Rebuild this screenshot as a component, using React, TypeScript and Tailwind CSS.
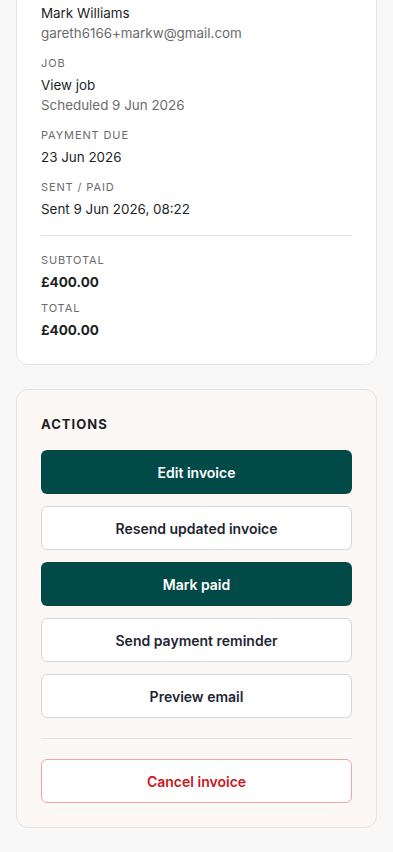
import React from 'react';

const font = { fontFamily: 'Inter, "Liberation Sans", sans-serif' };

function Field({
  label,
  value,
  sub,
  bold,
}: {
  label: string;
  value: string;
  sub?: string;
  bold?: boolean;
}) {
  return (
    <div>
      <p className="text-[11px] leading-4 uppercase tracking-[0.08em] text-[#6b6b6b]">{label}</p>
      <p
        className={
          bold
            ? 'mt-1 text-[13.5px] leading-5 font-bold text-[#1c1f26]'
            : 'mt-1 text-[13.4px] leading-5 text-[#1c1f26]'
        }>
        {value}
      </p>
      {sub && <p className="text-[13.4px] leading-5 text-[#6b6b6b]">{sub}</p>}
    </div>
  );
}

export default function App() {
  return (
    <main
      style={font}
      className="min-h-[852px] bg-[#f8f8f8] px-4 pb-6 flex flex-col gap-6 overflow-hidden">
      <section className="-mt-[22px] bg-white border border-[#e4e4e4] rounded-xl p-6">
        <div className="flex flex-col gap-3">
          <div>
            <p className="text-[13.4px] leading-5 text-[#1c1f26]">Mark Williams</p>
            <p className="text-[13.4px] leading-5 text-[#6b6b6b]">gareth6166+markw@gmail.com</p>
          </div>
          <Field label="Job" value="View job" sub="Scheduled 9 Jun 2026" />
          <Field label="Payment due" value="23 Jun 2026" />
          <Field label="Sent / Paid" value="Sent 9 Jun 2026, 08:22" />
        </div>
        <div className="my-4 border-t border-[#e4e4e4]" />
        <div className="flex flex-col gap-2">
          <Field label="Subtotal" value="£400.00" bold />
          <Field label="Total" value="£400.00" bold />
        </div>
      </section>

      <section className="bg-[#fcf8f6] border border-[#e6e2df] rounded-xl p-6">
        <h2 className="text-[13px] leading-5 font-bold tracking-[0.08em] text-[#1c1f26] mb-4">
          ACTIONS
        </h2>
        <div className="flex flex-col gap-3">
          <button className="h-11 rounded-md bg-[#024a48] text-white text-[14px] font-semibold">
            Edit invoice
          </button>
          <button className="h-11 rounded-md bg-white border border-[#d6d6d6] text-[#1f2633] text-[14px] font-semibold">
            Resend updated invoice
          </button>
          <button className="h-11 rounded-md bg-[#024a48] text-white text-[14px] font-semibold">
            Mark paid
          </button>
          <button className="h-11 rounded-md bg-white border border-[#d6d6d6] text-[#1f2633] text-[14px] font-semibold">
            Send payment reminder
          </button>
          <button className="h-11 rounded-md bg-white border border-[#d6d6d6] text-[#1f2633] text-[14px] font-semibold">
            Preview email
          </button>
        </div>
        <div className="my-5 border-t border-[#e4e4e4]" />
        <button className="w-full h-11 rounded-md bg-white border border-[#f4a3a3] text-[#c8171c] text-[14px] font-semibold">
          Cancel invoice
        </button>
      </section>
    </main>
  );
}
